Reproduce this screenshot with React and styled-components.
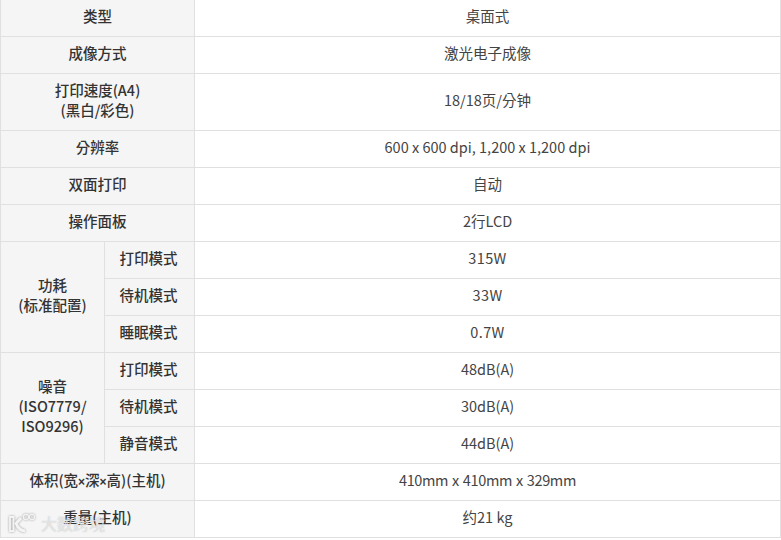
import React from "react";
import styled, { createGlobalStyle } from "styled-components";

const Global = createGlobalStyle`
  html, body { margin: 0; padding: 0; background: #fff; overflow: hidden; }
  body { font-family: "Noto Sans CJK KR", "Noto Sans CJK SC", "Noto Sans", sans-serif; }
`;
const Page = styled.div`
  position: relative;
  width: 781px;
  height: 540px;
  overflow: hidden;
`;
const Table = styled.table`
  width: 781px;
  margin-top: -1px;
  border-collapse: collapse;
  table-layout: fixed;
  font-size: 14.5px;
  line-height: 20px;
`;
const Head = styled.th`
  background: #f5f5f5;
  border: 1px solid #e0e0e0;
  color: #333;
  font-weight: 500;
  text-align: center;
  padding: 6px 4px 10px;
  height: 20px;
`;
const SubHead = styled(Head)`
  padding-left: 3px;
  padding-right: 5px;
`;
const Times = styled.span`
  font-family: "Liberation Sans", sans-serif;
  font-size: 12px;
  font-weight: 700;
  line-height: 0;
`;
const Value = styled.td`
  background: #fff;
  border: 1px solid #e0e0e0;
  color: #444;
  font-weight: 400;
  text-align: center;
  padding: 6px 4px 10px;
  height: 20px;
  letter-spacing: ${(p) => p.$track || 0}px;
  word-spacing: ${(p) => p.$gap || 0}px;
`;
const Mark = styled.div`
  position: absolute;
  left: 8px;
  top: 513px;
  display: flex;
  align-items: center;
  gap: 6px;
  color: rgba(255, 255, 255, 0.6);
  font-size: 16px;
  line-height: 20px;
  text-shadow: 0 0 1px rgba(130, 130, 130, 0.55);
  pointer-events: none;
`;
const Logo = styled.svg`
  filter: drop-shadow(0 0 1px #9a9a9a);
`;

const simple = [
  ["类型", "桌面式"],
  ["成像方式", "激光电子成像"],
];
const mid = [
  ["分辨率", "600 x 600 dpi, 1,200 x 1,200 dpi", 0],
  ["双面打印", "自动"],
  ["操作面板", "2行LCD"],
];
const groups = [
  {
    label: ["功耗", "(标准配置)"],
    rows: [["打印模式", "315W", 0.4], ["待机模式", "33W", 0.4], ["睡眠模式", "0.7W", 0.4]],
  },
  {
    label: ["噪音", "(ISO7779/", "ISO9296)"],
    rows: [["打印模式", "48dB(A)", 0], ["待机模式", "30dB(A)", 0], ["静音模式", "44dB(A)", 0]],
  },
];

const Row = ({ h, v, track, gap }) => (
  <tr>
    <Head colSpan={2}>{h}</Head>
    <Value $track={track} $gap={gap}>{v}</Value>
  </tr>
);

export default function App() {
  return (
    <Page>
      <Global />
      <Table>
        <colgroup>
          <col style={{ width: 104 }} />
          <col style={{ width: 90 }} />
          <col />
        </colgroup>
        <tbody>
          {simple.map(([h, v]) => <Row key={h} h={h} v={v} />)}
          <tr>
            <Head colSpan={2}>打印速度(A4)<br />(黑白/彩色)</Head>
            <Value>18/18页/分钟</Value>
          </tr>
          {mid.map(([h, v, t]) => <Row key={h} h={h} v={v} track={t} />)}
          {groups.map((g) =>
            g.rows.map(([h, v, t], i) => (
              <tr key={g.label[0] + h}>
                {i === 0 && (
                  <Head rowSpan={3}>
                    {g.label.map((l, j) => <React.Fragment key={l}>{j > 0 && <br />}{l}</React.Fragment>)}
                  </Head>
                )}
                <SubHead>{h}</SubHead>
                <Value $track={t}>{v}</Value>
              </tr>
            ))
          )}
          <Row h={<>体积(宽<Times>×</Times>深<Times>×</Times>高)(主机)</>} v="410mm x 410mm x 329mm" track={-0.35} gap={1} />
          <Row h="重量(主机)" v="约21 kg" />
        </tbody>
      </Table>
      <Mark>
        <Logo width="27" height="20" viewBox="0 0 27 20" fill="none" stroke="#f4f4f4">
          <path d="M2 4v14h3.5V4z" strokeWidth="1.8" />
          <path d="M13 5L8 10.5c2 5 6 8 9 7" strokeWidth="3" />
          <circle cx="18" cy="4" r="2.6" strokeWidth="1.1" />
          <circle cx="24" cy="4" r="2.6" strokeWidth="1.1" />
        </Logo>
        <span>大数跨境</span>
      </Mark>
    </Page>
  );
}
